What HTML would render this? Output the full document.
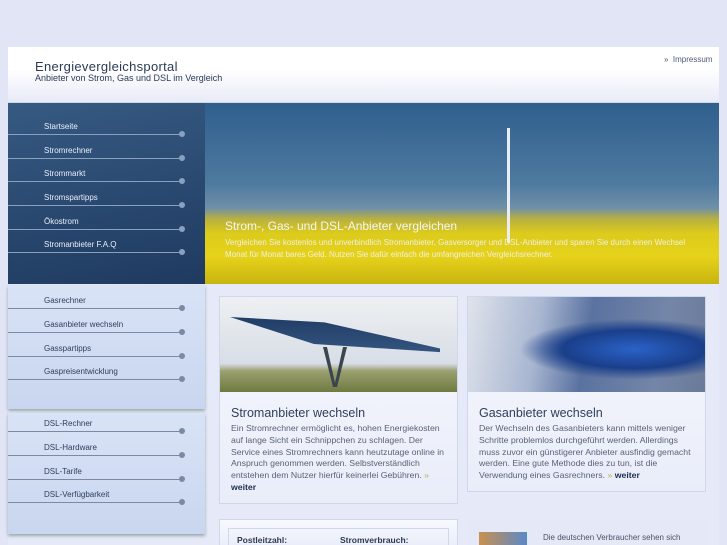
<!DOCTYPE html>
<html><head><meta charset="utf-8"><style>
*{margin:0;padding:0;box-sizing:border-box}
html,body{width:727px;height:545px;overflow:hidden}
body{background:#e2e5f6;font-family:"Liberation Sans",sans-serif;position:relative}
.abs{position:absolute}
#wrap{left:8px;top:47px;width:711px;height:498px;background:#e6e9f8}
#head{left:8px;top:47px;width:711px;height:56px;background:linear-gradient(#fff 40%,#e8ebf8);border-bottom:1px solid #cfd6e8}
.t1{left:35px;top:59px;font-size:13px;color:#2b3a55;letter-spacing:.3px}
.t2{left:35px;top:73px;font-size:9px;color:#2b3a55}
.imp{left:664px;top:55px;font-size:8px;color:#4a5a78}
#nav{left:8px;top:103px;width:197px;height:181px;background:linear-gradient(170deg,#365a82,#1f3a60)}
#hero{left:205px;top:103px;width:514px;height:181px;background:linear-gradient(#2f5f8e 0%,#4f7aa0 45%,#6f90a8 58%,#b8b040 64%,#dccb1c 72%,#e6d21a 85%,#c8b410 100%)}
.nl{position:absolute;left:0;width:174px;border-bottom:1px solid #8aa0bf;font-size:8px;padding-left:36px;height:13px}
.nl:after{content:"";position:absolute;right:-3px;bottom:-3px;width:6px;height:6px;border-radius:50%;background:#8aa0bf}
#nav .nl{color:#e8eefa}
.sb .nl{color:#2d3d5a;border-color:#7a8aa5}
.sb .nl:after{background:#7a8aa5}
.sb{position:absolute;left:8px;width:197px;background:linear-gradient(#d9e3f6,#c9d6ef);box-shadow:0 2px 3px #9aa}
.card{position:absolute;background:linear-gradient(#f8f9fe,#e9edf9);border:1px solid #cfd7ea;overflow:hidden}
.card h3{font-weight:normal;font-size:12.5px;color:#2f3f5c;margin:14px 0 3px 11px}
.card p{font-size:8.7px;line-height:11.8px;color:#5a6278;margin:0 10px 0 11px}
.card b{color:#1f2f50}
.g{color:#b7b34a}
</style></head><body>
<div class="abs" id="wrap"></div>
<div class="abs" id="head"></div>
<div class="abs t1">Energievergleichsportal</div>
<div class="abs t2">Anbieter von Strom, Gas und DSL im Vergleich</div>
<div class="abs imp">» &nbsp;Impressum</div>
<div class="abs" id="nav">
<div class="nl" style="top:19px">Startseite</div>
<div class="nl" style="top:43px">Stromrechner</div>
<div class="nl" style="top:66px">Strommarkt</div>
<div class="nl" style="top:90px">Stromspartipps</div>
<div class="nl" style="top:114px">Ökostrom</div>
<div class="nl" style="top:137px">Stromanbieter F.A.Q</div>
</div>
<div class="abs" id="hero">
<div class="abs" style="left:302px;top:25px;width:3px;height:115px;background:#e8eef4"></div>
<div class="abs" style="left:20px;top:116px;font-size:12px;color:#f4f6fa">Strom-, Gas- und DSL-Anbieter vergleichen</div>
<div class="abs" style="left:20px;top:134px;font-size:8px;line-height:12px;color:#f0f0e0;width:470px">Vergleichen Sie kostenlos und unverbindlich Stromanbieter, Gasversorger und DSL-Anbieter und sparen Sie durch einen Wechsel Monat für Monat bares Geld. Nutzen Sie dafür einfach die umfangreichen Vergleichsrechner.</div>
</div>
<div class="sb" style="top:285px;height:124px">
<div class="nl" style="top:11px">Gasrechner</div>
<div class="nl" style="top:35px">Gasanbieter wechseln</div>
<div class="nl" style="top:59px">Gasspartipps</div>
<div class="nl" style="top:82px">Gaspreisentwicklung</div>
</div>
<div class="sb" style="top:413px;height:121px">
<div class="nl" style="top:6px">DSL-Rechner</div>
<div class="nl" style="top:30px">DSL-Hardware</div>
<div class="nl" style="top:54px">DSL-Tarife</div>
<div class="nl" style="top:77px">DSL-Verfügbarkeit</div>
</div>
<div class="card" style="left:219px;top:296px;width:239px;height:208px">
<div style="position:relative;height:95px;background:linear-gradient(#eef0f2 0%,#d8dee6 70%,#9aa070 78%,#6f7a40 100%)">
<div class="abs" style="left:10px;top:20px;width:210px;height:45px;background:linear-gradient(#1f3d66,#3a5a86);clip-path:polygon(0 0,45% 12%,100% 70%,100% 78%,40% 60%)"></div>
<div class="abs" style="left:95px;top:50px;width:40px;height:40px;background:#3a4550;clip-path:polygon(20% 0,30% 0,50% 90%,70% 0,80% 0,55% 100%,45% 100%)"></div>
</div>
<h3>Stromanbieter wechseln</h3>
<p>Ein Stromrechner ermöglicht es, hohen Energiekosten auf lange Sicht ein Schnippchen zu schlagen. Der Service eines Stromrechners kann heutzutage online in Anspruch genommen werden. Selbstverständlich entstehen dem Nutzer hierfür keinerlei Gebühren. <span class="g">»</span> <b>weiter</b></p>
</div>
<div class="card" style="left:467px;top:296px;width:239px;height:196px">
<div style="height:95px;background:radial-gradient(ellipse 60% 40% at 70% 55%,#2a62c8,#1a3f8a 50%,transparent 80%),linear-gradient(100deg,#dfe3ec 0%,#a8b6d0 30%,#5a72a0 50%,#7486a8 80%,#6a7a98 100%)"></div>
<h3>Gasanbieter wechseln</h3>
<p>Der Wechseln des Gasanbieters kann mittels weniger Schritte problemlos durchgeführt werden. Allerdings muss zuvor ein günstigerer Anbieter ausfindig gemacht werden. Eine gute Methode dies zu tun, ist die Verwendung eines Gasrechners. <span class="g">»</span> <b>weiter</b></p>
</div>
<div class="card" style="left:219px;top:519px;width:239px;height:30px"><div style="margin:8px;border:1px solid #cfd7ea;height:30px;font-size:8.5px;font-weight:bold;color:#2d3a52;padding:6px 8px">Postleitzahl:<span style="position:absolute;left:120px">Stromverbrauch:</span></div></div>
<div class="card" style="left:467px;top:519px;width:239px;height:30px;border:none;background:#e4e8f7">
<div class="abs" style="left:12px;top:13px;width:48px;height:20px;background:linear-gradient(90deg,#c99050,#5a88c8)"></div>
<div class="abs" style="left:76px;top:14px;font-size:8px;color:#4a5268">Die deutschen Verbraucher sehen sich</div></div>
</body></html>
